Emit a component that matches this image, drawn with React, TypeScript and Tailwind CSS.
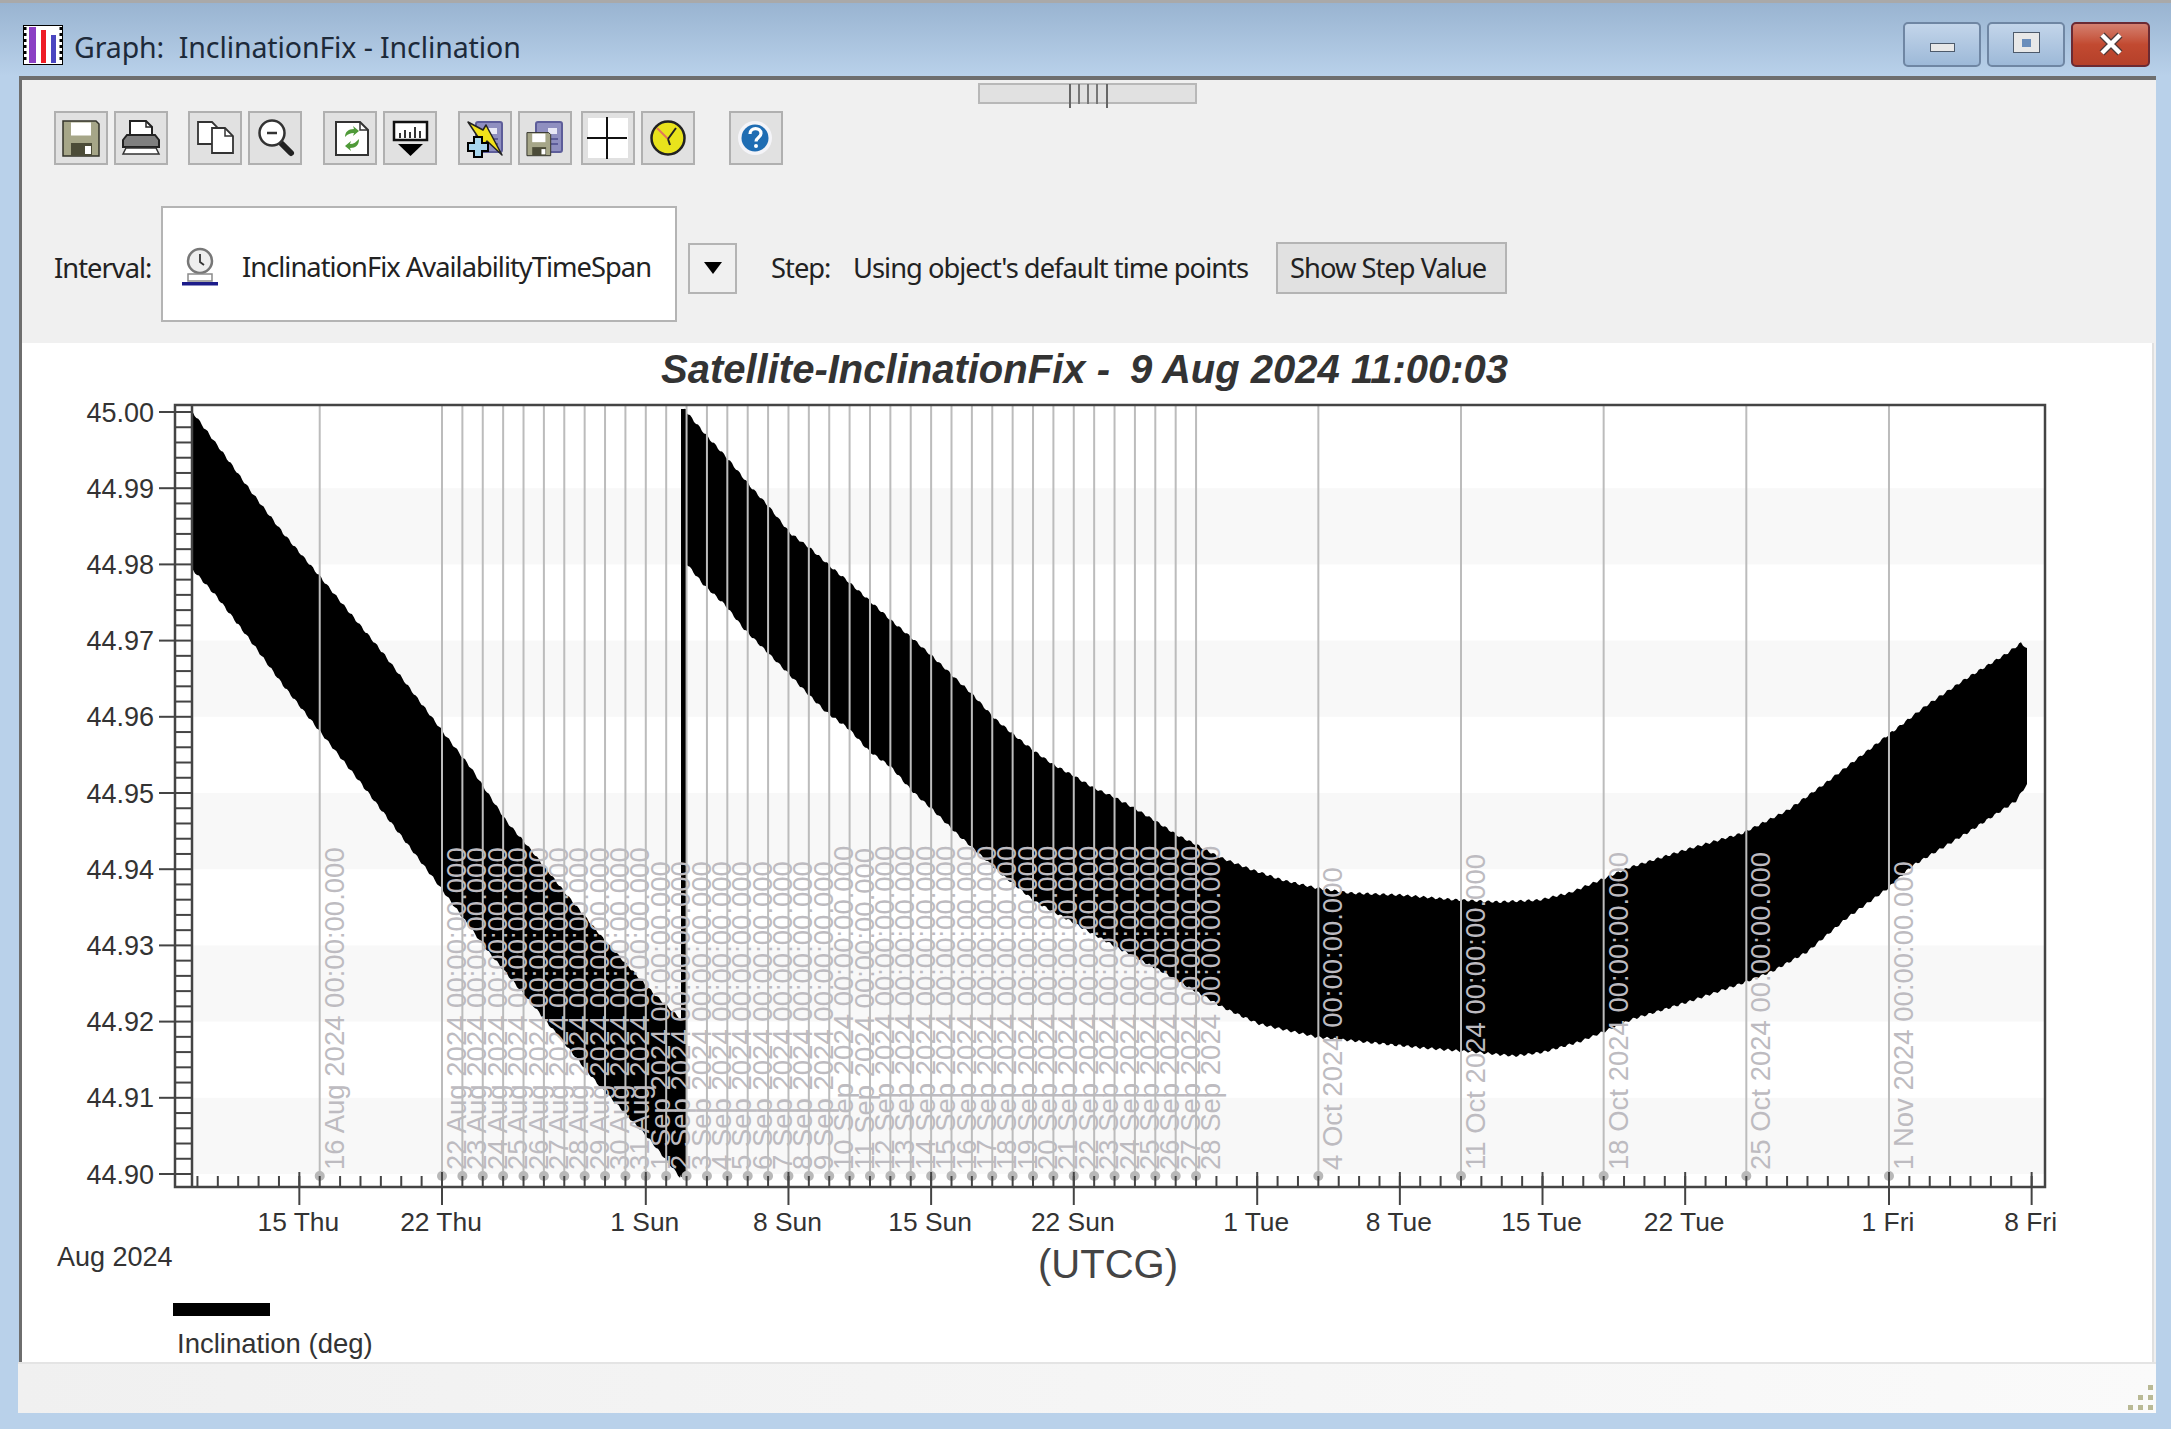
import React from "react";

type Pt = [number, number];

const dayX = (d: number) => 442 + 20.38 * d;
const tickY = (i: number) => 412 + 76.2 * i;

// upper and lower edges of the inclination band, read off the plot
const seg1Top: Pt[] = [[191, 410], [200, 422], [223, 453], [250, 490], [283, 533], [317, 573], [350, 613], [383, 653], [408, 686], [443, 732], [471, 768], [507, 822], [527, 845], [567, 895], [607, 943], [653, 993], [685, 1023]];
const seg1Bottom: Pt[] = [[191, 553], [193, 570], [217, 597], [250, 640], [283, 685], [360, 782], [437, 883], [487, 950], [537, 1010], [597, 1083], [650, 1140], [680, 1177], [685, 1167]];
const seg2Top: Pt[] = [[684, 409], [706, 435], [728, 459], [750, 486], [770, 508], [790, 533], [811, 549], [831, 567], [851, 584], [871, 602], [893, 622], [913, 639], [933, 657], [953, 676], [974, 696], [994, 718], [1014, 735], [1034, 751], [1054, 765], [1074, 776], [1094, 788], [1114, 797], [1134, 808], [1157, 822], [1177, 835], [1197, 845], [1219, 857], [1250, 869], [1282, 880], [1317, 888], [1350, 893], [1400, 895], [1459, 900], [1499, 902], [1539, 900], [1569, 893], [1603, 879], [1628, 868], [1688, 849], [1743, 833], [1788, 810], [1827, 782], [1862, 755], [1892, 732], [1927, 705], [1967, 678], [2006, 654], [2021, 643], [2027, 648]];
const seg2Bottom: Pt[] = [[684, 555], [686, 563], [703, 584], [726, 606], [744, 629], [766, 651], [786, 671], [806, 692], [826, 712], [849, 729], [869, 751], [891, 767], [913, 792], [933, 810], [956, 833], [974, 849], [1000, 873], [1036, 902], [1072, 922], [1116, 947], [1161, 971], [1197, 992], [1224, 1008], [1259, 1024], [1317, 1037], [1365, 1042], [1424, 1048], [1474, 1052], [1514, 1056], [1544, 1052], [1579, 1042], [1603, 1032], [1633, 1019], [1688, 1002], [1743, 983], [1773, 971], [1807, 952], [1847, 918], [1887, 889], [1912, 866], [1967, 833], [2016, 801], [2027, 784]];

// walks along an edge and adds the small scallops of the orbit oscillation
function scallop(edge: Pt[], amp: number) {
  const out: Pt[] = [];
  for (let i = 0; i < edge.length - 1; i++) {
    const [x0, y0] = edge[i];
    const [x1, y1] = edge[i + 1];
    const n = Math.max(1, Math.round((x1 - x0) / 2));
    for (let k = 0; k < n; k++) {
      const x = x0 + ((x1 - x0) * k) / n;
      const y = y0 + ((y1 - y0) * k) / n;
      out.push([x, y + amp * Math.sin(x * 0.78)]);
    }
  }
  out.push(edge[edge.length - 1]);
  return out;
}

function bandPath(top: Pt[], bottom: Pt[]) {
  const pts = [...scallop(top, 1.3), ...scallop(bottom, 1.3).reverse()];
  return "M" + pts.map(([x, y]) => `${x.toFixed(1)} ${y.toFixed(1)}`).join("L") + "Z";
}

const events: { d: number; label: string }[] = [{ d: -6, label: "16 Aug" }];
for (let n = 22; n <= 31; n++) events.push({ d: n - 22, label: `${n} Aug` });
for (let n = 1; n <= 28; n++) events.push({ d: n + 9, label: `${n} Sep` });
events.push({ d: 43, label: "4 Oct" }, { d: 50, label: "11 Oct" }, { d: 57, label: "18 Oct" }, { d: 64, label: "25 Oct" }, { d: 71, label: "1 Nov" });

const majors: [number, string][] = [[-7, "15 Thu"], [0, "22 Thu"], [10, "1 Sun"], [17, "8 Sun"], [24, "15 Sun"], [31, "22 Sun"], [40, "1 Tue"], [47, "8 Tue"], [54, "15 Tue"], [61, "22 Tue"], [71, "1 Fri"], [78, "8 Fri"]];

const Chart = () => {
  const minor: number[] = [];
  for (let d = -12; d <= 78; d++) minor.push(d);
  const rungs: number[] = [];
  for (let i = 0; i <= 50; i++) rungs.push(412 + 15.24 * i);

  return (
    <svg viewBox="22 343 2130 1019" className="block w-[2130px] h-[1019px] font-['Liberation_Sans',Arial,sans-serif]">
      <text x="661" y="383" fontSize="40" fontWeight="700" fontStyle="italic" fill="#333">Satellite-InclinationFix -  <tspan dx="9">9 Aug 2024 11:00:03</tspan></text>

      {[1, 3, 5, 7, 9].map((i) => (
        <rect key={i} x="192" y={tickY(i)} width="1853" height="76.2" fill="#f8f8f8" />
      ))}

      <path d={bandPath(seg1Top, seg1Bottom)} fill="#000" />
      <path d={bandPath(seg2Top, seg2Bottom)} fill="#000" />
      <rect x="681" y="409" width="5" height="768" fill="#000" />

      {events.map((e) => (
        <g key={e.label}>
          <line x1={dayX(e.d)} x2={dayX(e.d)} y1="404" y2="1176" stroke="#bcbcbc" strokeWidth="2" />
          <circle cx={dayX(e.d)} cy="1176" r="5" fill="#b8b8b8" />
          <text transform={`translate(${dayX(e.d) + 24} 1170) rotate(-90)`} fontSize="27.5" fill="#bdbbc0">
            {e.label} 2024 00:00:00.000
          </text>
        </g>
      ))}

      <g stroke="#444" strokeWidth="2">
        {rungs.map((y) => (
          <line key={y} x1="174" x2="192" y1={y} y2={y} />
        ))}
        {minor.map((d) => (
          <line key={d} x1={dayX(d)} x2={dayX(d)} y1="1176" y2="1187" />
        ))}
        {majors.map(([d]) => (
          <line key={d} x1={dayX(d)} x2={dayX(d)} y1="1172" y2="1205" />
        ))}
        {Array.from({ length: 11 }, (_, i) => (
          <line key={i} x1="159" x2="174" y1={tickY(i)} y2={tickY(i)} />
        ))}
        <line x1="192" x2="192" y1="404" y2="1187" strokeWidth="2.5" />
      </g>
      <rect x="175" y="405" width="1870" height="782" fill="none" stroke="#444" strokeWidth="2.5" />

      {Array.from({ length: 11 }, (_, i) => (
        <text key={i} x="154" y={tickY(i) + 9.5} fontSize="27" textAnchor="end" fill="#333">
          {(45 - i * 0.01).toFixed(2)}
        </text>
      ))}
      {majors.map(([d, t]) => (
        <text key={t} x={dayX(d) - 1} y="1231" fontSize="26.4" textAnchor="middle" fill="#333">
          {t}
        </text>
      ))}
      <text x="57" y="1266" fontSize="27" fill="#333">Aug 2024</text>
      <text x="1038" y="1278" fontSize="40" fill="#444">(UTCG)</text>
      <rect x="173" y="1303" width="97" height="13" fill="#000" />
      <text x="177" y="1353" fontSize="27.5" fill="#333">Inclination (deg)</text>
    </svg>
  );
};

const ToolButton = ({ children }: { children: React.ReactNode }) => (
  <div className="w-[54px] h-[54px] border-2 border-[#b0b0b0] bg-[#e1e1e1]">
    <svg viewBox="2 2 50 50" className="block w-[50px] h-[50px]">
      {children}
    </svg>
  </div>
);

const Floppy = ({ x = 0, y = 0, s = 1 }: { x?: number; y?: number; s?: number }) => (
  <g transform={`translate(${x} ${y}) scale(${s})`}>
    <path d="M9 10h33l3 3v32H9z" fill="#a6a688" stroke="#33332a" strokeWidth="1.5" />
    <rect x="17" y="11.5" width="20" height="13" fill="#fff" />
    <rect x="17" y="32" width="21" height="12.5" fill="#4c4c38" />
    <rect x="31" y="35" width="6" height="8" fill="#fff" />
  </g>
);

const Notebook = () => (
  <g>
    <rect x="18" y="11" width="26" height="30" rx="2" fill="#8f8fc0" stroke="#5d5d9a" strokeWidth="2" />
    <rect x="30" y="17" width="9" height="6" fill="#e8e8f6" />
    <path d="M33 28h7M33 33h7" stroke="#5d5d9a" strokeWidth="2" />
  </g>
);

const Toolbar = () => (
  <div className="flex ml-[32px] mt-[7px]">
    <div className="flex gap-[6px]">
      <ToolButton><Floppy /></ToolButton>
      <ToolButton>
        <path d="M16 10h16l6 6v10H16z" fill="#fff" stroke="#222" strokeWidth="2" />
        <path d="M32 10v6h6" fill="none" stroke="#222" strokeWidth="1.5" />
        <path d="M13 24h28l4 5v7H9v-7z" fill="#7f7f7f" stroke="#222" strokeWidth="2" />
        <path d="M12 37h30l3 6H9z" fill="#fff" stroke="#333" strokeWidth="1.5" />
      </ToolButton>
    </div>
    <div className="flex gap-[6px] ml-[20px]">
      <ToolButton>
        <path d="M10 11h14l5 5v17H10z" fill="#fff" stroke="#333" strokeWidth="1.8" />
        <path d="M24 17h13l8 8v17H24z" fill="#fff" stroke="#333" strokeWidth="1.8" />
        <path d="M37 17v8h8" fill="none" stroke="#333" strokeWidth="1.5" />
      </ToolButton>
      <ToolButton>
        <path d="M34 33l9 9" stroke="#222" strokeWidth="6" strokeLinecap="round" />
        <circle cx="24" cy="22" r="12.5" fill="#fff" stroke="#333" strokeWidth="2.5" />
        <path d="M19 22h10" stroke="#333" strokeWidth="2.5" />
      </ToolButton>
    </div>
    <div className="flex gap-[6px] ml-[21px]">
      <ToolButton>
        <path d="M13 11h24l8 8v25H13z" fill="#fff" stroke="#333" strokeWidth="2" />
        <path d="M37 11v8h8" fill="none" stroke="#333" strokeWidth="1.5" />
        <path d="M22 26c0-5 3-8 9-8l-1-3 6 5-6 5 1-3c-4 0-6 1-9 4z" fill="#4f9a38" />
        <path d="M36 28c0 6-3 9-9 9l1 3-6-5 6-5-1 3c4 0 6-2 9-5z" fill="#4f9a38" />
      </ToolButton>
      <ToolButton>
        <rect x="11" y="11" width="33" height="18" fill="#fff" stroke="#111" strokeWidth="2.5" />
        <path d="M17 27v-5M22 27v-8M27 27v-6M32 27v-11M37 27v-7" stroke="#333" strokeWidth="2" />
        <path d="M15 33h25L27.5 45z" fill="#000" />
      </ToolButton>
    </div>
    <div className="flex gap-[6px] ml-[21px]">
      <ToolButton>
        <Notebook />
        <path d="M10 11l15 8 3-5 16 30-15-14-3 5z" fill="#f2e21a" stroke="#222" strokeWidth="1.5" strokeLinejoin="round" />
        <path d="M16 26h8v6h6v8h-6v6h-8v-6h-6v-8h6z" fill="#a9d6ee" stroke="#000" strokeWidth="2" />
      </ToolButton>
      <ToolButton>
        <Notebook />
        <Floppy x={3} y={15} s={0.66} />
      </ToolButton>
    </div>
    <div className="flex gap-[6px] ml-[9px]">
      <ToolButton>
        <rect x="7" y="7" width="40" height="40" fill="#fff" />
        <path d="M26 6v42M6 27h40" stroke="#111" strokeWidth="2" />
      </ToolButton>
      <ToolButton>
        <circle cx="27" cy="27" r="16.5" fill="#e9e31c" stroke="#222" strokeWidth="2.5" />
        <path d="M16 17l11 11" stroke="#e2765a" strokeWidth="2" />
        <path d="M27 28l8-11M27 28l2 6" stroke="#222" strokeWidth="2" />
      </ToolButton>
    </div>
    <div className="flex ml-[34px]">
      <ToolButton>
        <circle cx="26" cy="27" r="17" fill="#f4f4f8" />
        <circle cx="26" cy="27" r="13.5" fill="#1f6db3" />
        <path d="M21 23c0-7 11-7 11-.5 0 4-5 4-5 8" fill="none" stroke="#fff" strokeWidth="3.2" />
        <circle cx="27" cy="35" r="2" fill="#fff" />
      </ToolButton>
    </div>
  </div>
);

const IntervalRow = () => (
  <div className="flex items-center mt-[41px] ml-[32px] text-[27.3px] leading-none text-[#222] font-['Noto_Sans',sans-serif] tracking-[-0.98px] whitespace-nowrap">
    <span className="w-[107px]">Interval:</span>
    <div className="flex items-center w-[516px] h-[116px] mb-[8px] bg-white border-2 border-[#b4b4b4] pl-[18px] pt-[6px]">
      <svg viewBox="0 0 38 40" className="w-[38px] h-[40px] shrink-0">
        <circle cx="19" cy="14" r="12" fill="#eee" stroke="#777" strokeWidth="2.5" />
        <path d="M19 7v8l4 3" fill="none" stroke="#333" strokeWidth="1.8" />
        <rect x="7" y="27" width="24" height="7" fill="#fff" stroke="#8a8a8a" strokeWidth="1.5" />
        <rect x="1" y="35" width="36" height="3.5" fill="#1c1c8a" />
      </svg>
      <span className="ml-[23px]">InclinationFix AvailabilityTimeSpan</span>
    </div>
    <div className="flex items-center justify-center w-[49px] h-[51px] ml-[11px] border-2 border-[#b4b4b4]">
      <svg viewBox="0 0 18 12" className="w-[18px] h-[12px]">
        <path d="M0 0h18L9 12z" fill="#000" />
      </svg>
    </div>
    <span className="w-[82px] ml-[34px]">Step:</span>
    <span className="w-[396px]">Using object's default time points</span>
    <div className="flex items-center w-[231px] h-[52px] ml-[27px] pl-[12px] bg-[#e1e1e1] border-2 border-[#b4b4b4]">Show Step Value</div>
  </div>
);

const WindowButtons = () => (
  <div className="flex gap-[6px]">
    <div className="flex items-end justify-center w-[78px] h-[45px] pb-[13px] rounded-[5px] border-2 border-[#6f86a3] bg-linear-to-b from-[#c3d5ea] to-[#9db9d8]">
      <div className="w-[25px] h-[9px] bg-[#e8e8e8] border border-[#4d5a6b]"></div>
    </div>
    <div className="flex items-center justify-center w-[78px] h-[45px] rounded-[5px] border-2 border-[#6f86a3] bg-linear-to-b from-[#c3d5ea] to-[#9db9d8]">
      <div className="flex items-center justify-center w-[27px] h-[21px] bg-[#e8e8e8] border border-[#4d5a6b] mb-[4px]">
        <div className="w-[9px] h-[8px] bg-[#6a8dbb]"></div>
      </div>
    </div>
    <div className="flex items-center justify-center w-[79px] h-[45px] rounded-[5px] border-2 border-[#6b2a33] bg-linear-to-b from-[#d4806f] via-[#c24a31] to-[#b5402a]">
      <svg viewBox="0 0 26 24" className="w-[26px] h-[24px] mb-[2px]">
        <path d="M4 3l18 18M22 3L4 21" stroke="#4d3a3a" strokeWidth="7" />
        <path d="M4 3l18 18M22 3L4 21" stroke="#fff" strokeWidth="4.5" />
      </svg>
    </div>
  </div>
);

export default function App() {
  return (
    <div className="flex flex-col w-[2171px] h-[1429px] bg-[#b9d1ea] overflow-hidden">
      <div className="flex items-center justify-between h-[76px] shrink-0 pt-[10px] pl-[23px] pr-[21px] border-t-[3px] border-[#a9a9a9] bg-linear-to-b from-[#99b4d1] to-[#b9d1ea]">
        <div className="flex items-center">
          <svg viewBox="0 0 40 40" className="w-[40px] h-[40px]">
            <rect x="0.5" y="0.5" width="39" height="39" fill="#fff" stroke="#000" />
            <path d="M2 2v36M38 2v36" stroke="#000" strokeWidth="3" strokeDasharray="3 3" />
            <rect x="6" y="2" width="7" height="36" fill="#8b3fc4" />
            <rect x="18" y="5" width="5" height="33" fill="#ee1c25" />
            <rect x="28" y="10" width="5" height="28" fill="#4a45c0" />
          </svg>
          <span className="ml-[11px] mt-[5px] text-[28.5px] leading-none text-[#1d2a3a] font-['Noto_Sans',sans-serif] tracking-[-0.1px] whitespace-pre">Graph:  InclinationFix - Inclination</span>
        </div>
        <WindowButtons />
      </div>

      <div className="flex flex-col ml-[19px] mr-[15px] h-[1337px] shrink-0">
        <div className="flex flex-col h-[1286px] border-t-[4px] border-l-[3px] border-[#6e6e6e] bg-[#f0f0f0]">
          <div className="flex flex-col h-[263px] shrink-0 bg-[#f0f0f0]">
            <div className="relative self-center w-[219px] h-[21px] mt-[3px] ml-[-4px] border-2 border-[#b8b8b8] bg-[#e1e1e1]">
              <div className="absolute left-[89px] top-[-1px] flex justify-between w-[39px] h-[24px]">
                <div className="w-[2px] h-[24px] bg-[#666]"></div>
                <div className="w-[2px] h-[20px] bg-[#777]"></div>
                <div className="w-[2px] h-[20px] bg-[#777]"></div>
                <div className="w-[2px] h-[20px] bg-[#777]"></div>
                <div className="w-[2px] h-[24px] bg-[#666]"></div>
              </div>
            </div>
            <Toolbar />
            <IntervalRow />
          </div>
          <div className="h-[1019px] w-[2132px] shrink-0 bg-white border-r-2 border-[#e0e0e0]">
            <Chart />
          </div>
        </div>
        <div className="flex items-end justify-end ml-[-1px] h-[51px] border-t-2 border-[#e4e4e4] bg-linear-to-r from-[#f0f0f0] to-[#fafafa] pr-[3px] pb-[3px]">
          <svg viewBox="0 0 25 25" className="w-[25px] h-[25px]">
            <path d="M20 0h5v5h-5zM10 10h5v5h-5zM20 10h5v5h-5zM0 20h5v5H0zM10 20h5v5h-5zM20 20h5v5h-5z" fill="#b9b995" />
          </svg>
        </div>
      </div>
    </div>
  );
}
